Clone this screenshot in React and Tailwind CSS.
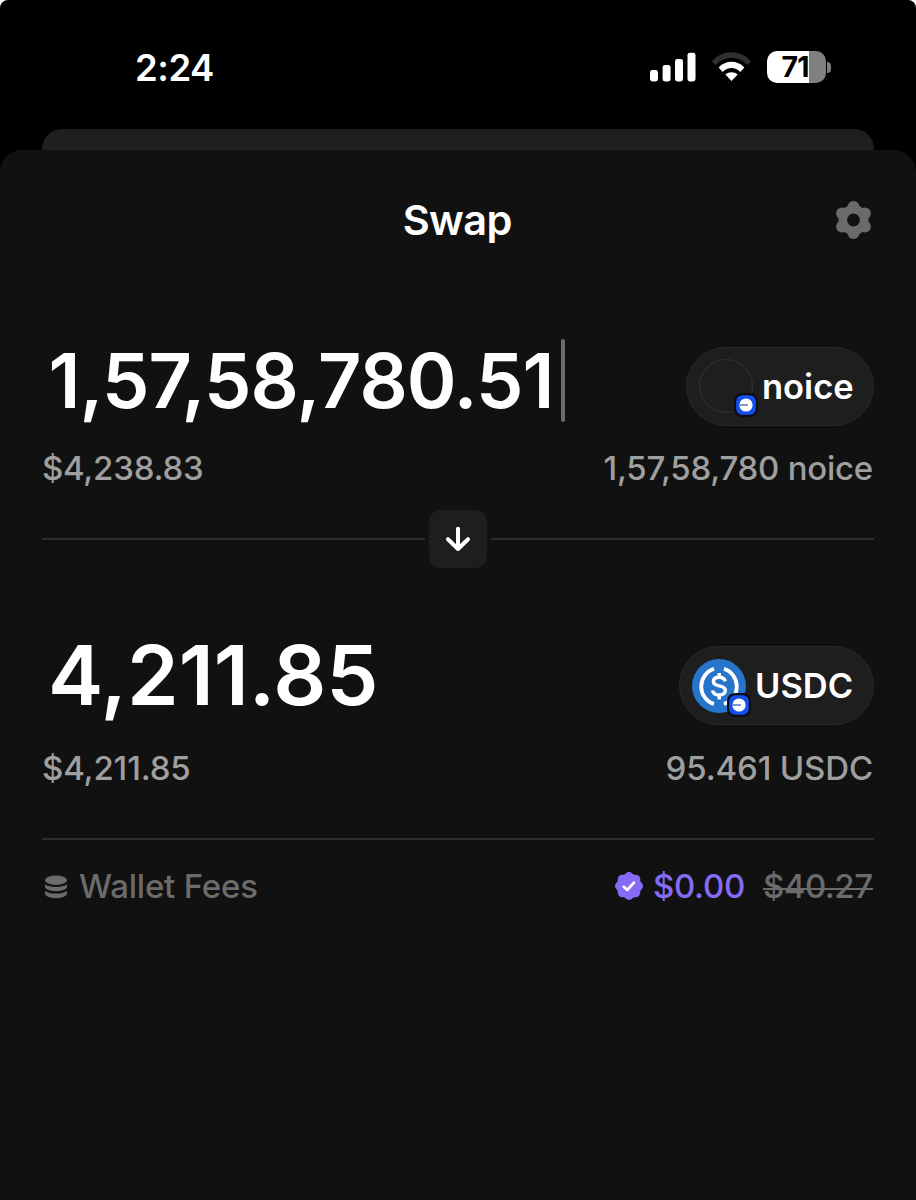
function SignalIcon() {
  return (
    <svg width="46" height="30" viewBox="0 0 46 30" fill="#fff">
      <rect x="0" y="18" width="8" height="11.5" rx="2.4" />
      <rect x="12.6" y="13" width="8" height="16.5" rx="2.4" />
      <rect x="25" y="7" width="8" height="22.5" rx="2.4" />
      <rect x="37.5" y="0.8" width="8" height="28.7" rx="2.4" />
    </svg>
  );
}

function WifiIcon() {
  return (
    <svg width="40" height="30" viewBox="0.5 0 40 30">
      <path d="M0.5 9.3C11 -2.7 29 -2.7 39.5 9.3L36 13C27 3.6 13 3.6 4 13Z" fill="#2f2f2f" />
      <path d="M7.2 15.4C14.2 8 25.8 8 32.8 15.4L28.9 20C23.8 14.8 16.2 14.8 11.1 20Z" fill="#fff" />
      <path d="M13.8 22.6C17.5 19.4 22.5 19.4 26.2 22.6L20 29Z" fill="#fff" />
    </svg>
  );
}

function Battery() {
  return (
    <div className="flex items-center gap-px">
      <div className="flex h-[32px] w-[59px] items-center justify-center rounded-[10px] bg-[linear-gradient(90deg,#fff_0_42px,#808080_42px)] pr-[3px]">
        <span className="text-[28.5px] font-bold leading-none tracking-[-1px] text-black">71</span>
      </div>
      <div className="h-[11px] w-[4px] rounded-r-full bg-[#808080]" />
    </div>
  );
}

function GearIcon() {
  return (
    <svg width="38" height="40" viewBox="-19.5 -20 38 40">
      <g fill="#6b6b6b">
        <circle r="15" />
        <circle cx="0" cy="-13" r="6" />
        <circle cx="11.4" cy="-6.6" r="6" />
        <circle cx="11.4" cy="6.6" r="6" />
        <circle cx="0" cy="13" r="6" />
        <circle cx="-11.4" cy="6.6" r="6" />
        <circle cx="-11.4" cy="-6.6" r="6" />
      </g>
      <circle r="6.4" fill="#111" />
    </svg>
  );
}

function NetworkBadge() {
  return (
    <svg className="absolute -bottom-[4px] -right-[5px]" width="24" height="24" viewBox="0 0 24 24">
      <rect width="24" height="24" rx="8" fill="#0a0c16" />
      <rect x="2.2" y="2.2" width="19.6" height="19.6" rx="6" fill="#1450ee" />
      <circle cx="12" cy="12" r="6.6" fill="#fff" />
      <path d="M5.8 12H14" stroke="#3c5fc0" strokeWidth="1.3" />
    </svg>
  );
}

function UsdcIcon() {
  return (
    <svg width="54" height="54" viewBox="0 0 54 54" fill="none" stroke="#fff">
      <circle cx="27" cy="27" r="27" fill="#2775ca" stroke="none" />
      <path d="M22 9.8A18.5 18.5 0 0 0 22 45M32 9.8A18.5 18.5 0 0 1 32 45" strokeWidth="3.8" />
      <path
        d="M33.2 22.4C32.7 19.6 30.3 18.3 27.2 18.3C23.7 18.3 21.4 19.9 21.4 22.5C21.4 25.4 23.9 26.2 27.2 26.9C30.9 27.6 33.3 28.7 33.3 31.5C33.3 34.4 30.7 36 27.2 36C23.5 36 21.1 34.5 20.5 31.5M27.2 14V18.5M27.2 35.8V40.6"
        strokeWidth="3.4"
      />
    </svg>
  );
}

function TokenPill({ label, children, className, iconClassName = "" }) {
  return (
    <div className={"flex h-[79px] shrink-0 items-center rounded-full border border-[#292929] bg-[#1e1e1e] pl-[12px] " + className}>
      <div className={"relative h-[54px] w-[54px] " + iconClassName}>
        {children}
        <NetworkBadge />
      </div>
      <span className="ml-[9px] whitespace-nowrap pt-[2px] text-[34.5px] font-semibold leading-none text-white">{label}</span>
    </div>
  );
}

function CoinsIcon() {
  return (
    <svg width="24" height="24" viewBox="0 0 24 24" fill="#6b6b6b">
      <ellipse cx="12" cy="5.2" rx="11" ry="4.8" />
      <path d="M1 9.5C5 12.8 19 12.8 23 9.5V11.8C22.4 17.6 1.6 17.6 1 11.8Z" />
      <path d="M1 16C5 19.4 19 19.4 23 16V18.3C22.4 24.8 1.6 24.8 1 18.3Z" />
    </svg>
  );
}

function VerifiedIcon() {
  return (
    <svg className="mb-px" width="28" height="28" viewBox="-14 -14 28 28">
      <g fill="#866bf6">
        <circle r="12.4" />
        <circle cx="0" cy="-9.3" r="4.7" />
        <circle cx="6.6" cy="-6.6" r="4.7" />
        <circle cx="9.3" cy="0" r="4.7" />
        <circle cx="6.6" cy="6.6" r="4.7" />
        <circle cx="0" cy="9.3" r="4.7" />
        <circle cx="-6.6" cy="6.6" r="4.7" />
        <circle cx="-9.3" cy="0" r="4.7" />
        <circle cx="-6.6" cy="-6.6" r="4.7" />
      </g>
      <path d="M-5.2 0.8L-1.8 4L5 -3.4" fill="none" stroke="#fff" strokeWidth="2.7" strokeLinecap="round" strokeLinejoin="round" />
    </svg>
  );
}

export default function App() {
  return (
    <div className="w-[916px] bg-white">
      <div className="flex h-[1200px] flex-col overflow-hidden rounded-t-[8px] bg-black font-['Inter',sans-serif]">
        <div className="flex h-[129px] shrink-0 items-start justify-between pl-[135px] pr-[85px] pt-[51px] text-white">
          <span className="text-[36.5px] font-semibold leading-[34px] tracking-[-0.5px]">2:24</span>
          <div className="flex items-center gap-[15.5px]">
            <SignalIcon />
            <WifiIcon />
            <Battery />
          </div>
        </div>
        <div className="mx-[42px] h-[21px] shrink-0 rounded-t-[20px] bg-[#1f1f21]" />

        <main className="flex-1 rounded-t-[22px] bg-[#111] px-[42px] leading-none">
          <header className="grid h-[142px] grid-cols-[1fr_auto_1fr] items-center pb-[2px]">
            <h1 className="col-start-2 pr-[1.5px] pt-[2px] text-[41.5px] font-semibold tracking-[-0.6px] text-white">Swap</h1>
            <div className="mr-[2px] justify-self-end"><GearIcon /></div>
          </header>

          <section className="pt-[55px]">
            <div className="flex h-[79px] items-center justify-between">
              <div className="flex items-center pb-[12px] pl-[6.5px]">
                <span className="text-[75.5px] font-semibold tracking-[-0.93px] text-white">1,57,58,780.51</span>
                <span className="ml-[7px] h-[83px] w-[4px] rounded-full bg-[#6b6b6b]" />
              </div>
              <TokenPill label="noice" className="w-[188px]" iconClassName="mb-px">
                <div className="h-[54px] w-[54px] rounded-full border-[1.5px] border-[#333]" />
              </TokenPill>
            </div>
            <div className="flex h-[84px] items-center justify-between pr-px text-[33px] font-medium tracking-[-0.25px] text-[#9f9f9f]">
              <span>$4,238.83</span>
              <span>1,57,58,780 noice</span>
            </div>
          </section>

          <div className="flex h-[58px] items-center gap-[4px]">
            <div className="h-[2px] flex-1 bg-[#2e2e2e]" />
            <button className="flex h-[58px] w-[58px] items-center justify-center rounded-[12px] bg-[#1e1e1e]">
              <svg width="26" height="26" viewBox="0 0 26 26" fill="none" stroke="#fff" strokeWidth="4" strokeLinecap="round" strokeLinejoin="round">
                <path d="M13 2.8V23M3 13.2L13 23L23 13.2" />
              </svg>
            </button>
            <div className="h-[2px] flex-1 bg-[#2e2e2e]" />
          </div>

          <section className="pt-[78px]">
            <div className="flex h-[79px] items-center justify-between">
              <span className="pb-[20px] pl-[6px] text-[83px] font-semibold text-white">4,211.85</span>
              <TokenPill label="USDC" className="w-[195px]">
                <UsdcIcon />
              </TokenPill>
            </div>
            <div className="flex h-[86px] items-center justify-between pr-px text-[33px] font-medium tracking-[-0.15px] text-[#9f9f9f]">
              <span>$4,211.85</span>
              <span>95.461 USDC</span>
            </div>
          </section>

          <div className="mt-[27px] h-[2px] bg-[#2e2e2e]" />
          <footer className="flex h-[93px] items-center justify-between pr-[1.5px] text-[33px] font-medium text-[#6b6b6b]">
            <div className="flex items-center gap-[11px] pl-[2px]">
              <CoinsIcon />
              <span className="tracking-[-0.2px]">Wallet Fees</span>
            </div>
            <div className="flex items-center tracking-[-0.5px]">
              <VerifiedIcon />
              <span className="ml-[10px] tracking-[-0.3px] text-[#866bf6]">$0.00</span>
              <s className="relative ml-[18px] no-underline">
                $40.27
                <span className="absolute inset-x-0 top-[18px] h-[2px] bg-[#6b6b6b]" />
              </s>
            </div>
          </footer>
        </main>
      </div>
    </div>
  );
}
